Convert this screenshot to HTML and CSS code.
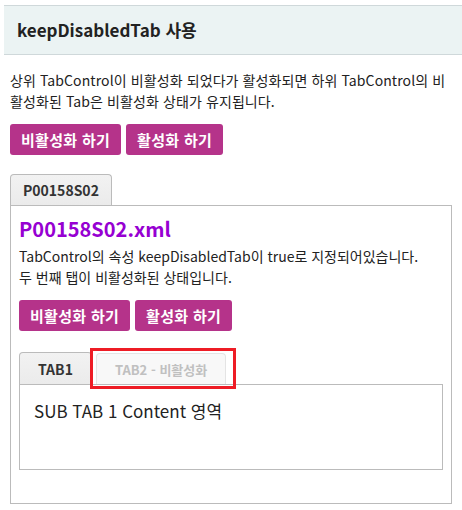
FILE: index.html
```html
<!DOCTYPE html>
<html lang="ko">
<head>
<meta charset="utf-8">
<link rel="stylesheet" href="styles.css">
</head>
<body>
<div class="header"><h1 class="title">keepDisabledTab 사용</h1></div>
<div class="main">
  <p class="desc">상위 TabControl이 비활성화 되었다가 활성화되면 하위 TabControl의 비활성화된 Tab은 비활성화 상태가 유지됩니다.</p>
  <div class="btns">
    <button class="btn">비활성화 하기</button>
    <button class="btn">활성화 하기</button>
  </div>
  <div class="tabs outer">
    <div class="tab-bar">
      <div class="tab active">P00158S02</div>
    </div>
    <div class="panel outer-panel">
      <h2 class="xml-title">P00158S02.xml</h2>
      <p class="info">TabControl의 속성 keepDisabledTab이 true로 지정되어있습니다.<br>두 번째 탭이 비활성화된 상태입니다.</p>
      <div class="btns inner-btns">
        <button class="btn">비활성화 하기</button>
        <button class="btn">활성화 하기</button>
      </div>
      <div class="tabs inner">
        <div class="tab-bar">
          <div class="tab active small">TAB1</div>
          <div class="tab disabled small">TAB2 - 비활성화<span class="mark"></span></div>
        </div>
        <div class="panel inner-panel">SUB TAB 1 Content 영역</div>
      </div>
    </div>
  </div>
</div>
</body>
</html>
```
FILE: styles.css
```css
* { box-sizing: border-box; }
body {
  margin: 0;
  font-family: "Noto Sans CJK KR", "Noto Sans", sans-serif;
  color: #222;
  background: #fff;
}
.header {
  margin: 5px 0 0 4px;
  height: 50px;
  background: #ebf3f3;
  border-top: 1px solid #cfd8da;
  border-bottom: 1px solid #cfd8da;
  display: flex;
  align-items: center;
  padding-left: 13px;
}
.title {
  margin: 0;
  font-size: 17px;
  font-weight: 700;
  color: #222;
  line-height: 24px;
}
.main {
  padding: 0 10px;
}
.desc {
  margin: 15px 0 0;
  font-size: 14px;
  line-height: 21px;
  letter-spacing: 0.1px;
}
.btns {
  display: flex;
  gap: 5px;
  margin-top: 12px;
}
.btn {
  height: 31px;
  padding: 0 11px;
  border: 0;
  border-radius: 3px;
  background: #b5338a;
  color: #fff;
  font-family: inherit;
  font-size: 15px;
  font-weight: 700;
  line-height: 31px;
  letter-spacing: 0.3px;
}
.tabs.outer { margin-top: 19px; }
.tab-bar {
  display: flex;
  gap: 4px;
}
.tab {
  position: relative;
  height: 31px;
  padding: 0 12px;
  border: 1px solid #bbb;
  border-bottom: 0;
  border-radius: 4px 4px 0 0;
  background: linear-gradient(#f2f2f2, #ebebeb);
  font-size: 14px;
  font-weight: 600;
  line-height: 31px;
  color: #333;
}
.tab.small { font-size: 14px; font-weight: 700; height: 32px; line-height: 32px; }
.tab.active.small { padding: 0 18px; }
.tab.disabled {
  background: #f8f8f8;
  border-color: #e4e4e4;
  color: #c0c0c0;
  font-size: 13px;
  font-weight: 600;
  padding: 0 18px;
  margin-top: 1px;
  height: 31px;
  line-height: 31px;
}
.mark {
  position: absolute;
  left: -7px;
  top: -6px;
  width: 146px;
  height: 41px;
  border: 3px solid #ee1c25;
}
.panel {
  border: 1px solid #bbb;
}
.outer-panel {
  padding: 9px 8px 33px 8px;
  height: 299px;
}
.xml-title {
  margin: 0;
  font-size: 20px;
  font-weight: 600;
  line-height: 28px;
  color: #9600d2;
}
.info {
  margin: 3px 0 0;
  font-size: 14px;
  line-height: 21px;
}
.inner-btns { margin-top: 12px; }
.tabs.inner { margin-top: 21px; }
.inner-panel {
  height: 86px;
  padding: 14px 14px;
  font-size: 17px;
  line-height: 24px;
  color: #222;
}
```
